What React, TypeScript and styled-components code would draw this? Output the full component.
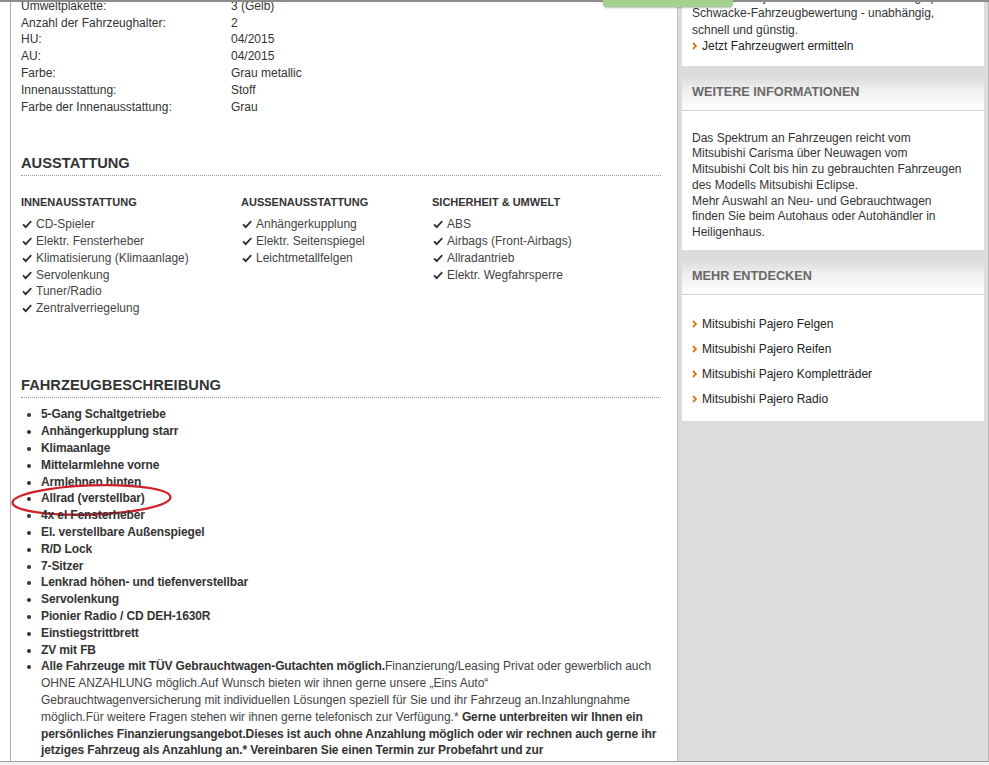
import React from 'react';
import styled, { createGlobalStyle } from 'styled-components';

const GlobalStyle = createGlobalStyle`
  html, body {
    margin: 0;
    padding: 0;
    overflow: hidden;
    background: #fff;
  }
  body {
    font-family: "Liberation Sans", Arial, sans-serif;
    font-size: 12px;
    color: #333;
  }
`;

const TopEdge = styled.div`
  position: fixed;
  top: 0;
  left: 0;
  right: 0;
  height: 2px;
  background: #8c8c8c;
  z-index: 5;
`;

const GreenTab = styled.div`
  position: fixed;
  top: 0;
  left: 603px;
  width: 130px;
  height: 7px;
  background: #a4d190;
  border-radius: 0 0 4px 4px;
  box-shadow: 0 1px 2px rgba(0, 0, 0, 0.25);
  z-index: 6;
`;

const BottomEdge = styled.div`
  position: fixed;
  left: 0;
  right: 0;
  bottom: 0;
  height: 3px;
  border-top: 1px solid #a0a0a0;
  background: #f1f1f1;
  z-index: 5;
`;

const Page = styled.div`
  display: flex;
  align-items: stretch;
  margin-top: -20px;
  padding-left: 10px;
  width: 989px;
  box-sizing: border-box;
`;

const Main = styled.main`
  width: 667px;
  box-sizing: border-box;
  border-left: 1px solid #a9a9a9;
  padding: 17.8px 16px 0 10px;
  line-height: 16.8px;
`;

const DataTable = styled.div`
  display: grid;
  grid-template-columns: 210px 1fr;
`;

const Cell = styled.div`
  color: #333;
`;

const SectionTitle = styled.h2<{ $gap: number }>`
  margin: ${p => p.$gap}px 0 0;
  padding-bottom: 3px;
  font-size: 14.7px;
  line-height: 18px;
  font-weight: bold;
  color: #333;
  border-bottom: 1px dotted #9a9a9a;
`;

const FeatureColumns = styled.div`
  display: grid;
  grid-template-columns: 220px 191px 1fr;
  margin-top: 17.8px;
`;

const ColumnTitle = styled.h3`
  margin: 0 0 5.5px;
  font-size: 11px;
  font-weight: bold;
  color: #333;
  line-height: 16.8px;
`;

const CheckList = styled.ul`
  list-style: none;
  margin: 0;
  padding: 0;
`;

const CheckItem = styled.li`
  display: flex;
  align-items: center;
  gap: 4px;
  color: #444;
  svg {
    flex: none;
    margin-left: 1px;
  }
`;

const BulletList = styled.ul`
  margin: 8.8px 1px 0 0;
  padding-left: 20px;
  list-style: disc;
`;

const Bullet = styled.li`
  position: relative;
  font-weight: bold;
  color: #333;
  letter-spacing: -0.12px;
`;

const Plain = styled.span`
  font-weight: normal;
  color: #444;
  letter-spacing: 0;
`;

const Marking = styled.svg`
  position: absolute;
  left: -31px;
  top: -8px;
  pointer-events: none;
`;

const Sidebar = styled.aside`
  flex: 1;
  background: #dcdcdc;
  border-left: 1px solid #c2c2c2;
  border-right: 1px solid #b5b5b5;
  padding: 0 4px 0 4px;
  display: flex;
  flex-direction: column;
  gap: 7px;
`;

const Box = styled.section`
  background: #fff;
`;

const BoxHeader = styled.div`
  height: 36px;
  display: flex;
  align-items: center;
  padding: 1px 10px 0;
  background: linear-gradient(to bottom, #d6d6d6 0%, #efefef 45%, #fff 100%);
  border-bottom: 1px solid #d2d2d2;
  font-size: 12.7px;
  font-weight: bold;
  color: #686868;
`;

const BoxText = styled.div<{ $pad: string; $lh: number }>`
  padding: ${p => p.$pad};
  line-height: ${p => p.$lh}px;
  color: #333;
`;

const LinkList = styled.ul`
  list-style: none;
  margin: 0;
  padding: 16.5px 10px 9.5px;
`;

const LinkItem = styled.li<{ $lh: number }>`
  display: flex;
  align-items: center;
  line-height: ${p => p.$lh}px;
  color: #222;
  svg {
    margin-right: 5px;
    flex: none;
  }
`;

const Check = () => (
  <svg width="10" height="9" viewBox="0 0 10.5 9">
    <path d="M0.4 5.1 L1.8 3.7 L3.9 5.7 L9.1 0.4 L10.4 1.7 L3.9 8.6 Z" fill="#2e2e2e" />
  </svg>
);

const Chevron = () => (
  <svg width="5" height="8" viewBox="0 0 5 8">
    <path d="M1 1 L4 4 L1 7" fill="none" stroke="#e0771b" strokeWidth="1.8" />
  </svg>
);

const details: [string, string][] = [
  ['Umweltplakette:', '3 (Gelb)'],
  ['Anzahl der Fahrzeughalter:', '2'],
  ['HU:', '04/2015'],
  ['AU:', '04/2015'],
  ['Farbe:', 'Grau metallic'],
  ['Innenausstattung:', 'Stoff'],
  ['Farbe der Innenausstattung:', 'Grau'],
];

const equipment = [
  {
    title: 'INNENAUSSTATTUNG',
    items: ['CD-Spieler', 'Elektr. Fensterheber', 'Klimatisierung (Klimaanlage)', 'Servolenkung', 'Tuner/Radio', 'Zentralverriegelung'],
  },
  {
    title: 'AUSSENAUSSTATTUNG',
    items: ['Anhängerkupplung', 'Elektr. Seitenspiegel', 'Leichtmetallfelgen'],
  },
  {
    title: 'SICHERHEIT & UMWELT',
    items: ['ABS', 'Airbags (Front-Airbags)', 'Allradantrieb', 'Elektr. Wegfahrsperre'],
  },
];

const description = [
  '5-Gang Schaltgetriebe',
  'Anhängerkupplung starr',
  'Klimaanlage',
  'Mittelarmlehne vorne',
  'Armlehnen hinten',
  'Allrad (verstellbar)',
  '4x el Fensterheber',
  'El. verstellbare Außenspiegel',
  'R/D Lock',
  '7-Sitzer',
  'Lenkrad höhen- und tiefenverstellbar',
  'Servolenkung',
  'Pionier Radio / CD DEH-1630R',
  'Einstiegstrittbrett',
  'ZV mit FB',
];

const discover = [
  'Mitsubishi Pajero Felgen',
  'Mitsubishi Pajero Reifen',
  'Mitsubishi Pajero Kompletträder',
  'Mitsubishi Pajero Radio',
];

export default function App() {
  return (
    <>
      <GlobalStyle />
      <TopEdge />
      <GreenTab />
      <Page>
        <Main>
          <DataTable>
            {details.map(([label, value]) => (
              <React.Fragment key={label}>
                <Cell>{label}</Cell>
                <Cell>{value}</Cell>
              </React.Fragment>
            ))}
          </DataTable>

          <SectionTitle $gap={38.8}>AUSSTATTUNG</SectionTitle>
          <FeatureColumns>
            {equipment.map(col => (
              <div key={col.title}>
                <ColumnTitle>{col.title}</ColumnTitle>
                <CheckList>
                  {col.items.map(item => (
                    <CheckItem key={item}>
                      <Check />
                      {item}
                    </CheckItem>
                  ))}
                </CheckList>
              </div>
            ))}
          </FeatureColumns>

          <SectionTitle $gap={58.6}>FAHRZEUGBESCHREIBUNG</SectionTitle>
          <BulletList>
            {description.map(item => (
              <Bullet key={item}>
                {item}
                {item === 'Allrad (verstellbar)' && (
                  <Marking width="165" height="36" viewBox="0 0 165 36">
                    <ellipse
                      cx="81.5"
                      cy="17.9"
                      rx="79"
                      ry="14.6"
                      transform="rotate(-2 81.5 17.9)"
                      fill="none"
                      stroke="#d0222a"
                      strokeWidth="2.3"
                    />
                  </Marking>
                )}
              </Bullet>
            ))}
            <Bullet>
              Alle Fahrzeuge mit TÜV Gebrauchtwagen-Gutachten möglich.
              <Plain>
                Finanzierung/Leasing Privat oder gewerblich auch OHNE ANZAHLUNG möglich.Auf Wunsch bieten wir
                ihnen gerne unsere „Eins Auto“
                <br />
                Gebrauchtwagenversicherung mit individuellen Lösungen speziell für Sie und ihr Fahrzeug
                an.Inzahlungnahme möglich.Für weitere Fragen stehen wir ihnen gerne telefonisch zur Verfügung.*{' '}
              </Plain>
              Gerne unterbreiten wir Ihnen ein persönliches Finanzierungsangebot.Dieses ist auch ohne Anzahlung
              möglich oder wir rechnen auch gerne ihr jetziges Fahrzeug als Anzahlung an.* Vereinbaren Sie einen
              Termin zur Probefahrt und zur
              <br />
              Besprechung Ihrer Wünsche. Wir freuen uns auf Ihren Besuch in Heiligenhaus!
            </Bullet>
          </BulletList>
        </Main>

        <Sidebar>
          <Box>
            <BoxText $pad="9px 10px 12px" $lh={16.3}>
              Ermitteln Sie jetzt den Wert Ihres Fahrzeugs per
              <br />
              Schwacke-Fahrzeugbewertung - unabhängig,
              <br />
              schnell und günstig.
              <LinkItem $lh={16.3}>
                <Chevron />
                Jetzt Fahrzeugwert ermitteln
              </LinkItem>
            </BoxText>
          </Box>

          <Box>
            <BoxHeader>WEITERE INFORMATIONEN</BoxHeader>
            <BoxText $pad="19.5px 10px 9.5px" $lh={15.7}>
              Das Spektrum an Fahrzeugen reicht vom
              <br />
              Mitsubishi Carisma über Neuwagen vom
              <br />
              Mitsubishi Colt bis hin zu gebrauchten Fahrzeugen
              <br />
              des Modells Mitsubishi Eclipse.
              <br />
              Mehr Auswahl an Neu- und Gebrauchtwagen
              <br />
              finden Sie beim Autohaus oder Autohändler in
              <br />
              Heiligenhaus.
            </BoxText>
          </Box>

          <Box>
            <BoxHeader>MEHR ENTDECKEN</BoxHeader>
            <LinkList>
              {discover.map(link => (
                <LinkItem key={link} $lh={25}>
                  <Chevron />
                  {link}
                </LinkItem>
              ))}
            </LinkList>
          </Box>
        </Sidebar>
      </Page>
      <BottomEdge />
    </>
  );
}
